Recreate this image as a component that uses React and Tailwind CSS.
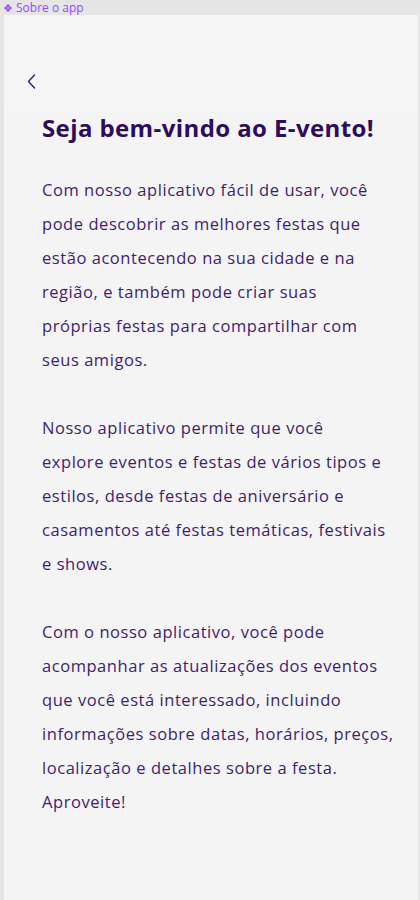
export default function App() {
  const p1 = [
    "Com nosso aplicativo fácil de usar, você",
    "pode descobrir as melhores festas que",
    "estão acontecendo na sua cidade e na",
    "região, e também pode criar suas",
    "próprias festas para compartilhar com",
    "seus amigos.",
  ];
  const p2 = [
    "Nosso aplicativo permite que você",
    "explore eventos e festas de vários tipos e",
    "estilos, desde festas de aniversário e",
    "casamentos até festas temáticas, festivais",
    "e shows.",
  ];
  const p3 = [
    "Com o nosso aplicativo, você pode",
    "acompanhar as atualizações dos eventos",
    "que você está interessado, incluindo",
    "informações sobre datas, horários, preços,",
    "localização e detalhes sobre a festa.",
    "Aproveite!",
  ];
  const Para = ({ lines }) => (
    <div>
      {lines.map((l, i) => (
        <div key={i} className="whitespace-nowrap h-[34px] leading-[34px]">{l}</div>
      ))}
    </div>
  );
  return (
    <div className="w-[420px] h-[900px] bg-[#e5e5e5] flex flex-col overflow-hidden" style={{ fontFamily: '"Open Sans", sans-serif' }}>
      <div className="h-[15px] flex items-center pl-[3px] gap-[3px] text-[12px] text-[#9747ff] leading-none">
        <span className="text-[11px]">❖</span>
        <span>Sobre o app</span>
      </div>
      <div className="ml-[4px] w-[414px] flex-1 bg-[#f4f4f4] flex flex-col">
        <div className="h-[92px] bg-[#f5f5f5] flex items-start pt-[58px] pl-[22px]">
          <svg width="12" height="18" viewBox="0 0 12 18" fill="none">
            <path d="M8.5 2 L2.5 8.5 L8.5 15" stroke="#3b1a6b" strokeWidth="1.4" strokeLinecap="round" strokeLinejoin="round" />
          </svg>
        </div>
        <div className="pl-[38px] pt-[3px]">
          <h1 className="text-[24px] font-bold text-[#2e0c5a] leading-[36px] tracking-[0.4px] whitespace-nowrap">Seja bem-vindo ao E-vento!</h1>
          <div className="mt-[27px] text-[16.5px] text-[#3f1d6e] tracking-[0.55px] flex flex-col gap-[34px]">
            <Para lines={p1} />
            <Para lines={p2} />
            <Para lines={p3} />
          </div>
        </div>
      </div>
    </div>
  );
}
